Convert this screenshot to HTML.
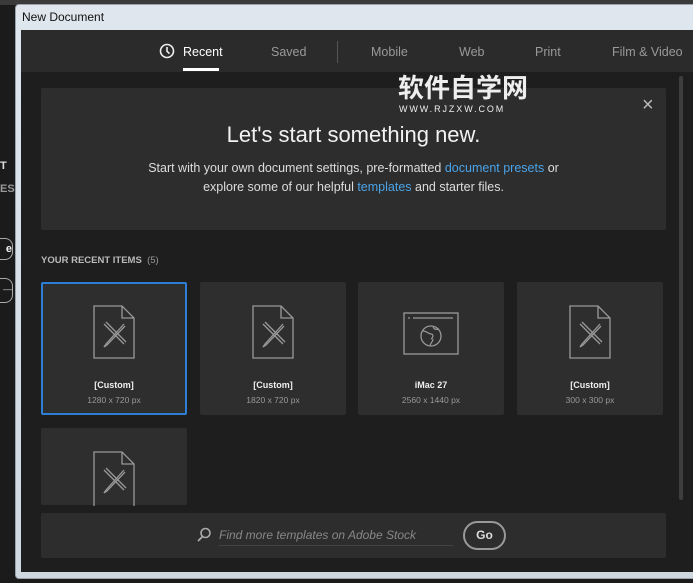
<!DOCTYPE html>
<html><head><meta charset="utf-8"><style>
*{margin:0;padding:0;box-sizing:border-box}
body{width:693px;height:583px;background:#1b1b1b;position:relative;overflow:hidden;font-family:"Liberation Sans","Noto Sans CJK SC",sans-serif}
.abs{position:absolute}
.win{left:15px;top:4px;width:690px;height:575px;background:linear-gradient(#dfe6ee,#cfd7df);border:1px solid #9aa3ad;border-radius:4px}
.title{left:22px;top:10px;font-size:12px;color:#111}
.inner{left:21px;top:30px;width:672px;height:542px;background:#1e1e1e}
.tabs{left:21px;top:30px;width:672px;height:42px;background:#2b2b2b}
.tab{top:45px;font-size:12.5px;color:#9a9a9a}
.hero{left:41px;top:88px;width:625px;height:142px;background:#2d2d2d;border-radius:2px}
.card{top:282px;width:146px;height:133px;background:#2e2e2e;border-radius:2px;text-align:center;color:#ddd}
.card .n{position:absolute;left:0;right:0;top:98px;font-size:9px;font-weight:bold;color:#eee}
.card .s{position:absolute;left:0;right:0;top:113px;font-size:8.5px;color:#999}
.card svg{position:absolute;left:51px;top:22px}
a{color:#4aa3e8;text-decoration:none}
</style></head><body>
<div class="abs" style="left:0;top:0;width:693px;height:5px;background:#3a3a3a"></div>
<div class="abs" style="left:0;top:160px;color:#ddd;font-size:11px;font-weight:bold">T</div>
<div class="abs" style="left:0;top:183px;color:#999;font-size:11px;font-weight:bold">ES</div>
<div class="abs" style="left:0;top:238px;width:13px;height:22px;border:1px solid #aaa;border-left:none;border-radius:0 8px 8px 0;color:#eee;font-size:11px;font-weight:bold;line-height:20px;text-align:right">e</div>
<div class="abs" style="left:0;top:278px;width:13px;height:25px;border:1px solid #aaa;border-left:none;border-radius:0 8px 8px 0;color:#ccc;font-size:9px;line-height:20px;text-align:right">—</div>
<div class="abs win"></div>
<div class="abs title">New Document</div>
<div class="abs inner"></div>
<div class="abs tabs"></div>
<svg class="abs" style="left:159px;top:43px" width="16" height="16" viewBox="0 0 16 16"><circle cx="8" cy="8" r="6.5" fill="none" stroke="#eee" stroke-width="1.6"/><path d="M8 4v4.3l2.5 2.3" fill="none" stroke="#eee" stroke-width="1.6"/></svg>
<div class="abs tab" style="left:183px;color:#fff">Recent</div>
<div class="abs" style="left:183px;top:68px;width:36px;height:3px;background:#fff"></div>
<div class="abs tab" style="left:271px">Saved</div>
<div class="abs" style="left:337px;top:41px;width:1px;height:22px;background:#555"></div>
<div class="abs tab" style="left:371px">Mobile</div>
<div class="abs tab" style="left:459px">Web</div>
<div class="abs tab" style="left:535px">Print</div>
<div class="abs tab" style="left:612px">Film &amp; Video</div>
<div class="abs" style="left:679px;top:76px;width:4px;height:424px;background:#3e3e3e;border-radius:2px"></div>
<div class="abs hero"></div>
<div class="abs" style="left:398px;top:72px;font-size:26px;line-height:32px;font-weight:bold;color:#eee">软件自学网</div>
<div class="abs" style="left:399px;top:104px;font-size:9px;line-height:10px;color:#eee;letter-spacing:1.9px">WWW.RJZXW.COM</div>
<div class="abs" style="left:642px;top:94px;font-size:20px;color:#bbb">×</div>
<div class="abs" style="left:41px;top:122px;width:625px;text-align:center;font-size:22px;color:#f2f2f2">Let's start something new.</div>
<div class="abs" style="left:41px;top:159px;width:625px;text-align:center;font-size:12.5px;color:#ddd;line-height:19px">Start with your own document settings, pre-formatted <a>document presets</a> or<br>explore some of our helpful <a>templates</a> and starter files.</div>
<div class="abs" style="left:41px;top:255px;font-size:9.5px;color:#bbb;font-weight:bold">YOUR RECENT ITEMS <span style="font-weight:normal;color:#999">&nbsp;(5)</span></div>

<div class="abs card" style="left:41px;border:2px solid #2d7fd6"><svg width="44" height="56" viewBox="0 0 44 56" style="left:49px;top:20px"><path d="M2 2h28l12 12v40H2z M30 2v12h12" fill="none" stroke="#999" stroke-width="1.3"/><path d="M12 20l20 20M14 18l20 20M32 20l-18 20l-2 3 3-2 18-19" fill="none" stroke="#999" stroke-width="1.3"/></svg><div class="n" style="top:96px">[Custom]</div><div class="s" style="top:111px">1280 x 720 px</div></div>
<div class="abs card" style="left:200px"><svg width="44" height="56" viewBox="0 0 44 56"><path d="M2 2h28l12 12v40H2z M30 2v12h12" fill="none" stroke="#999" stroke-width="1.3"/><path d="M12 20l20 20M14 18l20 20M32 20l-18 20l-2 3 3-2 18-19" fill="none" stroke="#999" stroke-width="1.3"/></svg><div class="n">[Custom]</div><div class="s">1820 x 720 px</div></div>
<div class="abs card" style="left:358px"><svg width="56" height="44" viewBox="0 0 56 44" style="left:45px;top:30px"><rect x="1" y="1" width="54" height="41" fill="none" stroke="#999" stroke-width="1.3"/><path d="M5 6h2M10 6h40" stroke="#999" stroke-width="1.2"/><circle cx="28" cy="24" r="10" fill="none" stroke="#999" stroke-width="1.3"/><path d="M20 19c4 0 5 3 8 3s2 4 0 5M30 15c1 2 3 3 6 2M27 34c0-3 3-4 3-7" fill="none" stroke="#999" stroke-width="1.2"/></svg><div class="n">iMac 27</div><div class="s">2560 x 1440 px</div></div>
<div class="abs card" style="left:517px"><svg width="44" height="56" viewBox="0 0 44 56"><path d="M2 2h28l12 12v40H2z M30 2v12h12" fill="none" stroke="#999" stroke-width="1.3"/><path d="M12 20l20 20M14 18l20 20M32 20l-18 20l-2 3 3-2 18-19" fill="none" stroke="#999" stroke-width="1.3"/></svg><div class="n">[Custom]</div><div class="s">300 x 300 px</div></div>
<div class="abs card" style="left:41px;top:428px;height:77px"><svg width="44" height="56" viewBox="0 0 44 56" style="left:51px;top:22px"><path d="M2 2h28l12 12v44H2z M30 2v12h12" fill="none" stroke="#999" stroke-width="1.3"/><path d="M12 20l20 20M14 18l20 20M32 20l-18 20l-2 3 3-2 18-19" fill="none" stroke="#999" stroke-width="1.3"/></svg></div>

<div class="abs" style="left:41px;top:513px;width:625px;height:45px;background:#2d2d2d;border-radius:2px"></div>
<svg class="abs" style="left:196px;top:527px" width="16" height="16" viewBox="0 0 16 16"><circle cx="9.5" cy="6" r="4.5" fill="none" stroke="#aaa" stroke-width="1.6"/><path d="M6.5 9.5L2 14" stroke="#aaa" stroke-width="1.8"/></svg>
<div class="abs" style="left:219px;top:528px;font-size:12px;font-style:italic;color:#888">Find more templates on Adobe Stock</div>
<div class="abs" style="left:219px;top:545px;width:234px;height:1px;background:#444"></div>
<div class="abs" style="left:463px;top:521px;width:43px;height:29px;border:2px solid #999;border-radius:15px;color:#ddd;font-size:12px;font-weight:bold;text-align:center;line-height:25px">Go</div>
</body></html>
